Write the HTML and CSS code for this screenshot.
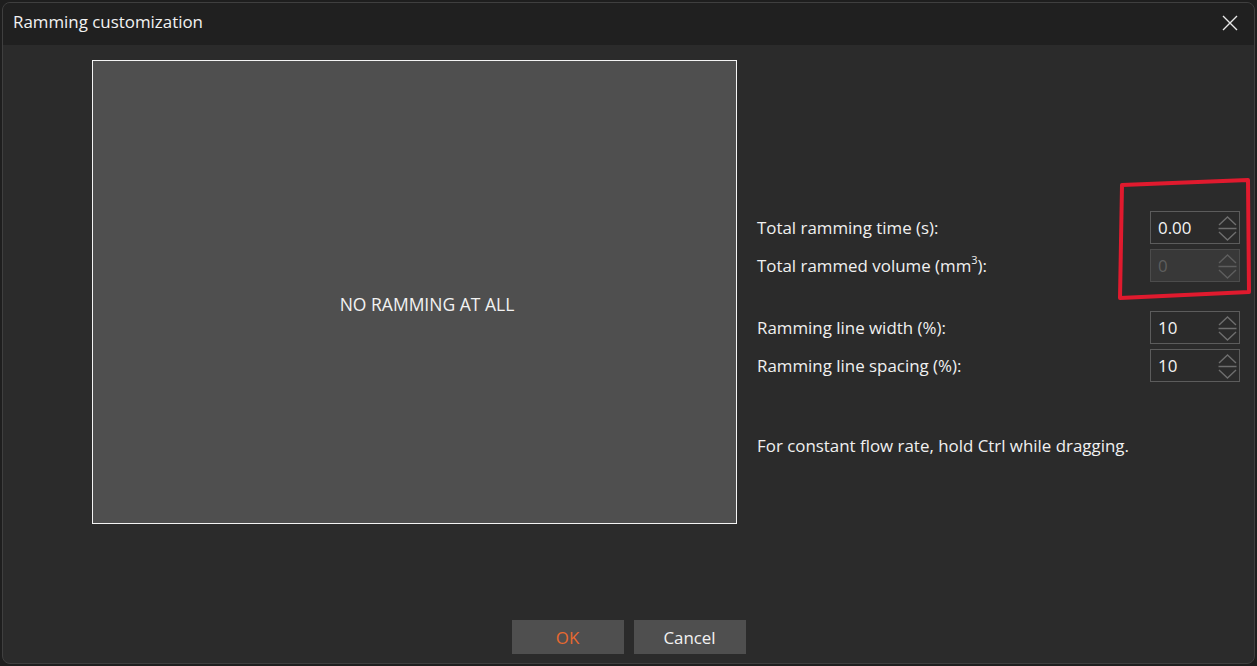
FILE: index.html
```html
<!DOCTYPE html>
<html lang="en">
<head>
<meta charset="utf-8">
<title>Ramming customization</title>
<link rel="stylesheet" href="styles.css">
</head>
<body>
<div class="window">
  <div class="titlebar">
    <span class="title">Ramming customization</span>
    <button class="close" aria-label="Close">
      <svg width="16" height="16" viewBox="0 0 16 16"><path d="M1 1 L15 15 M15 1 L1 15" stroke="#e8e8e8" stroke-width="1.4" fill="none"/></svg>
    </button>
  </div>
  <div class="body">
    <div class="main">
      <div class="canvas"><span>NO RAMMING AT ALL</span></div>
      <div class="panel">
        <div class="group first">
          <div class="row">
            <span class="label">Total ramming time (s):</span>
            <div class="spin"><span class="val">0.00</span>
              <svg class="arrows" width="20" height="26" viewBox="0 0 20 26"><path d="M2 10 L10.5 2 L19 10 M1.5 13.5 H19.5 M2 17 L10.5 25 L19 17" stroke="#6e6e6e" stroke-width="1.4" fill="none"/></svg>
            </div>
          </div>
          <div class="row">
            <span class="label">Total rammed volume (mm<sup>3</sup>):</span>
            <div class="spin disabled"><span class="val">0</span>
              <svg class="arrows" width="20" height="26" viewBox="0 0 20 26"><path d="M2 10 L10.5 2 L19 10 M1.5 13.5 H19.5 M2 17 L10.5 25 L19 17" stroke="#5e5e5e" stroke-width="1.4" fill="none"/></svg>
            </div>
          </div>
        </div>
        <div class="group">
          <div class="row">
            <span class="label">Ramming line width (%):</span>
            <div class="spin"><span class="val">10</span>
              <svg class="arrows" width="20" height="26" viewBox="0 0 20 26"><path d="M2 10 L10.5 2 L19 10 M1.5 13.5 H19.5 M2 17 L10.5 25 L19 17" stroke="#6e6e6e" stroke-width="1.4" fill="none"/></svg>
            </div>
          </div>
          <div class="row">
            <span class="label">Ramming line spacing (%):</span>
            <div class="spin"><span class="val">10</span>
              <svg class="arrows" width="20" height="26" viewBox="0 0 20 26"><path d="M2 10 L10.5 2 L19 10 M1.5 13.5 H19.5 M2 17 L10.5 25 L19 17" stroke="#6e6e6e" stroke-width="1.4" fill="none"/></svg>
            </div>
          </div>
        </div>
        <p class="hint">For constant flow rate, hold Ctrl while dragging.</p>
      </div>
    </div>
    <div class="buttons">
      <button class="btn ok">OK</button>
      <button class="btn">Cancel</button>
    </div>
    <svg class="annotation" width="140" height="130" viewBox="0 0 140 130"><path d="M8 10 L134 5 L135 117 L6 123 Z" stroke="#e01a2e" stroke-width="4" fill="none" stroke-linejoin="round"/></svg>
  </div>
</div>
</body>
</html>
```
FILE: styles.css
```css
* { box-sizing: border-box; }
html, body { margin: 0; padding: 0; }
body {
  width: 1257px;
  height: 666px;
  background: #1e1e1e;
  font-family: "Open Sans", "Noto Sans", sans-serif;
  color: #f0f0f0;
  overflow: hidden;
  padding: 2px 2px 2px 2px;
}
.window {
  width: 1253px;
  height: 662px;
  border: 1px solid #3f3f3f;
  border-radius: 8px;
  background: #2b2b2b;
  overflow: hidden;
  display: flex;
  flex-direction: column;
}
.titlebar {
  height: 42px;
  background: #202020;
  display: flex;
  align-items: center;
  justify-content: space-between;
  padding: 0 10px 0 10px;
  flex: none;
}
.title {
  font-size: 16.9px;
  color: #f2f2f2;
  margin-top: -5px;
}
.close {
  background: none;
  border: 0;
  padding: 0;
  width: 20px;
  height: 20px;
  display: flex;
  align-items: center;
  justify-content: center;
  margin-right: 4px;
  margin-top: -2px;
}
.body {
  position: relative;
  flex: 1;
  display: flex;
  flex-direction: column;
}
.main {
  display: flex;
  padding: 15px 0 0 89px;
  gap: 20px;
  flex: 1;
}
.canvas {
  width: 645px;
  height: 464px;
  border: 1px solid #f4f4f4;
  background: #4f4f4f;
  display: flex;
  align-items: center;
  justify-content: center;
  font-size: 17.5px;
  color: #f2f2f2;
}
.canvas span { margin: 24px 0 0 25px; }
.panel {
  display: flex;
  flex-direction: column;
  width: 483px;
}
.group {
  display: flex;
  flex-direction: column;
  gap: 5px;
  margin-top: 29px;
}
.group.first { margin-top: 151px; }
.row {
  display: flex;
  align-items: center;
  justify-content: space-between;
  height: 33px;
}
.label {
  font-size: 16.9px;
  color: #f0f0f0;
  margin-top: -1px;
}
.label sup { font-size: 11px; vertical-align: 8px; line-height: 0; }
.spin {
  width: 90px;
  height: 33px;
  border: 1px solid #5c5c5c;
  background: #2b2b2b;
  display: flex;
  align-items: center;
  justify-content: space-between;
  padding: 0 2px 0 7px;
}
.spin .val { font-size: 16.9px; color: #f4f4f4; }
.spin.disabled { background: #383838; border-color: #4c4c4c; }
.spin.disabled .val { color: #5e5e5e; }
.hint {
  margin: 52px 0 0 0;
  font-size: 16.9px;
  color: #f0f0f0;
}
.buttons {
  display: flex;
  justify-content: center;
  gap: 10px;
  padding-bottom: 9px;
}
.btn {
  width: 112px;
  height: 34px;
  border: 0;
  background: #4f4f4f;
  font-family: "Open Sans", "Noto Sans", sans-serif;
  font-size: 16.9px;
  color: #f2f2f2;
}
.btn.ok { color: #e8692f; }
.annotation {
  position: absolute;
  left: 1111px;
  top: 130px;
}
```
